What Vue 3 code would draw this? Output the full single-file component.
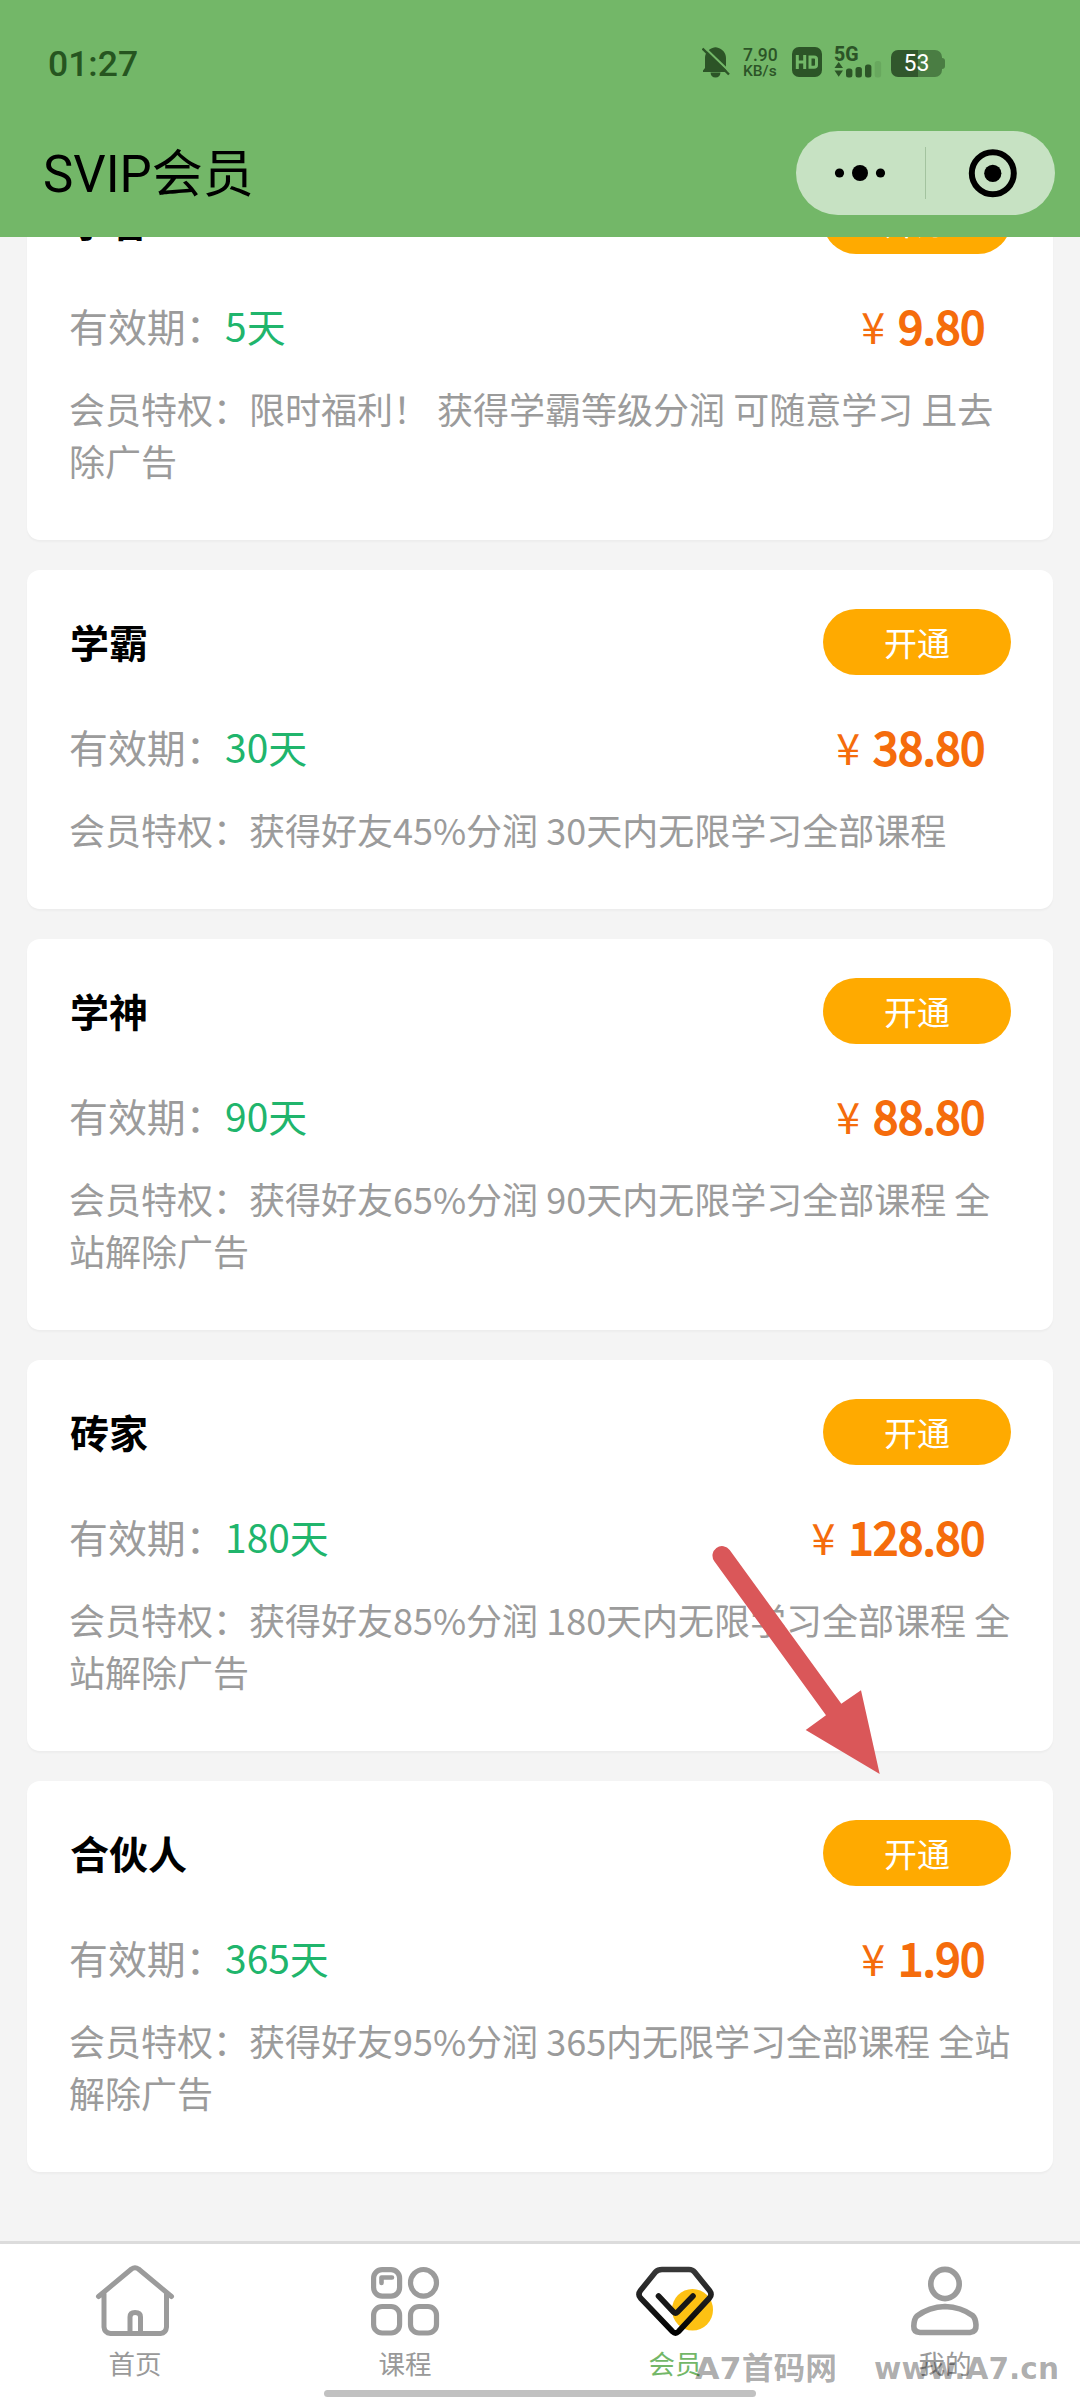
<script setup>
const plans = [
  { name: '学者', days: '5天', price: '9.80', lines: ['会员特权：限时福利！ 获得学霸等级分润 可随意学习 且去', '除广告'] },
  { name: '学霸', days: '30天', price: '38.80', lines: ['会员特权：获得好友45%分润 30天内无限学习全部课程'] },
  { name: '学神', days: '90天', price: '88.80', lines: ['会员特权：获得好友65%分润 90天内无限学习全部课程 全', '站解除广告'] },
  { name: '砖家', days: '180天', price: '128.80', lines: ['会员特权：获得好友85%分润 180天内无限学习全部课程 全', '站解除广告'] },
  { name: '合伙人', days: '365天', price: '1.90', lines: ['会员特权：获得好友95%分润 365内无限学习全部课程 全站', '解除广告'] },
]
</script>

<template>
  <div class="screen">
    <header class="header">
      <div class="status">
        <span class="time">01:27</span>
        <div class="indicators">
          <svg class="bell" width="28" height="31" viewBox="0 0 28 31">
            <path d="M1 25V23.500L3 21V11C3 5.500 7 2 10.500 1Q13.500 -.5 16.500 1C20 2 24 5.500 24 11V21L25 25Z" />
            <path d="M8.500 25.500H18.500Q18 30.500 13.500 30.500Q9 30.500 8.500 25.500Z" />
            <path d="M2.500 .5L28 25" stroke="#73b768" stroke-width="2.200" fill="none" />
            <path d="M.5 1.500L27 27.500" stroke="#2c5427" stroke-width="2.400" fill="none" />
          </svg>
          <div class="speed"><span class="rate">7.90</span><span class="unit">KB/s</span></div>
          <svg class="hd" width="30" height="30" viewBox="0 0 30 30">
            <rect width="30" height="30" rx="7" />
            <path d="M5.300 8V22M12.700 8V22M5.300 15H12.700M18 10H22Q24.500 10 24.500 12V18Q24.500 20.300 22 20.300H18Z" fill="none" stroke="#73b768" stroke-width="3" />
          </svg>
          <div class="signal">
            <span class="net">5G</span>
            <svg width="48" height="17" viewBox="0 0 48 17">
              <path d="M.5 7L4.700 1L9 7ZM.5 9.500H9L4.700 15.700Z" />
              <rect x="12" y="7.500" width="6.400" height="9" rx="2.500" />
              <rect x="21.500" y="6" width="6.400" height="10.500" rx="2.500" />
              <rect x="31" y="3.500" width="6.400" height="13" rx="2.500" />
              <rect x="40.700" y="0" width="6.400" height="16.500" rx="2.500" opacity=".15" />
            </svg>
          </div>
          <div class="battery"><span>53</span></div>
        </div>
      </div>
      <div class="titlebar">
        <h1>SVIP会员</h1>
        <div class="capsule">
          <svg width="259" height="84" viewBox="0 0 259 84">
            <circle cx="43.500" cy="42" r="4.600" />
            <circle cx="64" cy="42" r="8" />
            <circle cx="84.500" cy="42" r="4.600" />
            <rect x="129" y="16" width="1" height="52" fill="#a3c39f" />
            <circle cx="196.800" cy="42.300" r="21" fill="none" stroke="#000" stroke-width="6" />
            <circle cx="196.800" cy="42.300" r="8.600" />
          </svg>
        </div>
      </div>
    </header>

    <main class="content">
      <div class="list">
        <section v-for="p in plans" :key="p.name" class="card">
          <div class="row top">
            <h2>{{ p.name }}</h2>
            <button class="open">开通</button>
          </div>
          <div class="row info">
            <div class="period">有效期：<span>{{ p.days }}</span></div>
            <div class="price">¥ <b>{{ p.price }}</b></div>
          </div>
          <div class="desc">
            <p v-for="l in p.lines" :key="l">{{ l }}</p>
          </div>
        </section>
      </div>
    </main>

    <nav class="tabs">
      <div class="tab">
        <svg width="80" height="72" viewBox="0 0 80 72" fill="none" stroke="#9b9b9b" stroke-width="5" stroke-linecap="round" stroke-linejoin="round">
          <path d="M3.500 31.500L36.500 4Q40 1.500 43.500 4L76.500 31.500M9 29V62Q9.500 68 15.500 68.500H65.500Q71 68 71.500 62V29M35 67V52Q35 47.500 40 47.500Q45.500 47.500 45.500 52V67" />
        </svg>
        <span>首页</span>
      </div>
      <div class="tab">
        <svg width="80" height="72" viewBox="0 0 80 72" fill="none" stroke="#9b9b9b" stroke-width="5.200" stroke-linecap="round" stroke-linejoin="round">
          <rect x="8.600" y="4.600" width="26" height="26.500" rx="8.500" />
          <ellipse cx="58.500" cy="17.800" rx="13" ry="13.300" />
          <rect x="8.600" y="41.500" width="26" height="26.500" rx="8.500" />
          <rect x="45.500" y="41.500" width="26" height="26.500" rx="8.500" />
          <path d="M16.500 18V12.500H27" stroke-width="4.600" />
        </svg>
        <span>课程</span>
      </div>
      <div class="tab active">
        <svg width="80" height="72" viewBox="0 0 80 72" fill="none" stroke-linecap="round" stroke-linejoin="round">
          <defs>
            <linearGradient id="gem" x1="0" y1="0" x2="0" y2="1">
              <stop offset="0" stop-color="#383838" />
              <stop offset=".7" stop-color="#111" />
              <stop offset="1" stop-color="#000" />
            </linearGradient>
          </defs>
          <ellipse cx="57.500" cy="44.800" rx="20.500" ry="20.800" fill="#fdc113" />
          <path d="M27 4.500H54Q57.500 4.500 59.500 7L74.500 25.500Q77.500 29.500 74.500 33L43.500 66.500Q40.500 69.500 37.500 66.500L5.500 33Q2.500 29.500 5.500 25.500L20.500 7Q23 4.500 27 4.500Z" stroke="url(#gem)" stroke-width="5.600" />
          <path d="M23.500 31L38.500 47Q40.500 49 42.500 47L58 31" stroke="#181818" stroke-width="5.600" />
        </svg>
        <span>会员</span>
      </div>
      <div class="tab">
        <svg width="80" height="72" viewBox="0 0 80 72" fill="none" stroke="#9b9b9b" stroke-width="5.600" stroke-linejoin="round">
          <ellipse cx="40" cy="19" rx="14.200" ry="14.600" />
          <path d="M15 67.500H65Q71.500 67 71 60Q70.500 53 67.500 50.500Q56 42 40 41.500Q24 42 12 51Q9 54 8.800 61Q8.500 67 15 67.500Z" />
        </svg>
        <span>我的</span>
      </div>
    </nav>
    <div class="homebar"></div>

    <svg class="arrow" width="180" height="240" viewBox="0 0 180 240">
      <path d="M29.700 10L141.300 163.700L161 150.300L179.700 234L105.700 190L126 175.300L14.300 21.200A9.500 9.500 0 0 1 29.700 10Z" fill="#da5759" />
    </svg>
    <svg class="watermark" width="370" height="40" viewBox="0 0 370 40">
      <text x="0" y="32" textLength="142" lengthAdjust="spacingAndGlyphs">A7首码网</text>
      <text x="179" y="32" textLength="185" lengthAdjust="spacingAndGlyphs">www.A7.cn</text>
    </svg>
  </div>
</template>

<style>
body { margin: 0; }
</style>

<style scoped>
.screen {
  position: relative;
  width: 1080px;
  height: 2400px;
  overflow: hidden;
  display: flex;
  flex-direction: column;
  background: #f4f4f4;
  font-family: "Noto Sans CJK SC", sans-serif;
}
h1, h2, p { margin: 0; }
.header {
  flex: none;
  height: 237px;
  background: #73b768;
  font-family: Roboto, "Noto Sans CJK SC", sans-serif;
}
.status {
  height: 126px;
  display: flex;
  justify-content: space-between;
  padding: 0 138px 0 48px;
  color: #2c5427;
}
.time { font-size: 35.500px; font-weight: 500; line-height: 128px; color: #265520; }
.indicators { display: flex; align-items: flex-start; padding-top: 47px; fill: #2c5427; }
.speed {
  display: flex;
  flex-direction: column;
  width: 37px;
  margin-left: 13px;
  font-weight: 500;
}
.rate { font-size: 17.500px; line-height: 17px; }
.unit { font-size: 15.500px; line-height: 14px; }
.hd { margin-left: 12px; }
.signal { display: flex; flex-direction: column; width: 48px; margin-left: 12px; }
.net { height: 13.500px; font-size: 19.500px; line-height: 15px; font-weight: 800; }
.battery {
  position: relative;
  width: 51px;
  height: 27px;
  margin: 3px 0 0 9px;
  border-radius: 7px;
  background: linear-gradient(90deg, #31572c 53%, #4a7d43 53%);
  color: #fff;
  font-size: 23px;
  line-height: 28px;
  text-align: center;
}
.battery::after {
  content: "";
  position: absolute;
  left: 51px;
  top: 8px;
  width: 3px;
  height: 11px;
  border-radius: 0 4px 4px 0;
  background: #4a7d43;
}
.titlebar { display: flex; justify-content: space-between; padding: 5px 25px 0 43px; }
h1 { font-size: 51px; font-weight: 400; line-height: 87px; }
.capsule { height: 84px; border-radius: 42px; background: #c7e2c3; }
.content { flex: 1; overflow: hidden; padding: 0 27px; }
.list { display: flex; flex-direction: column; gap: 29.500px; margin-top: -88.500px; }
.card {
  flex: none;
  box-sizing: border-box;
  padding: 39px 42px 54.500px 42px;
  border-radius: 13px;
  background: #fff;
  box-shadow: 0 2px 2px rgba(0, 0, 0, .03);
}
.row { display: flex; justify-content: space-between; align-items: center; }
.top { height: 66px; }
h2 { padding: 0 0 2px 1px; font-size: 39px; font-weight: 700; line-height: 64px; }
.open {
  width: 188px;
  height: 66px;
  padding: 0;
  border: 0;
  border-radius: 33px;
  background: #ffaa00;
  color: #fff;
  font: 400 33px/67px "Noto Sans CJK SC", sans-serif;
}
.info { height: 60px; margin-top: 41px; padding-right: 26px; }
.period { font-size: 38.900px; line-height: 60px; color: #9b9b9b; white-space: nowrap; }
.period span { margin-left: .5px; color: #20b56c; }
.price { font-size: 43px; line-height: 60px; color: #f56c0c; white-space: pre; word-spacing: 3.500px; }
.price b { font-size: 44.700px; font-weight: 400; -webkit-text-stroke: 2px #f56c0c; }
.desc { margin-top: 27px; font-size: 36px; line-height: 52px; color: #9b9b9b; }
.desc p { white-space: pre; }
.tabs {
  flex: none;
  box-sizing: border-box;
  height: 159px;
  display: flex;
  border-top: 3px solid #dcdcdc;
  background: #fff;
}
.tab {
  flex: 1;
  display: flex;
  flex-direction: column;
  align-items: center;
  padding-top: 21px;
  color: #999;
  font-size: 26.500px;
  line-height: 40px;
}
.tab span { margin-top: 6px; }
.active { color: #73b768; }
.homebar {
  position: absolute;
  left: 324px;
  top: 2389.500px;
  width: 432px;
  height: 7px;
  border-radius: 4px;
  background: #c1c1c1;
}
.arrow { position: absolute; left: 700px; top: 1540px; }
.watermark {
  position: absolute;
  left: 695px;
  top: 2347px;
  font-family: "DejaVu Sans", "Noto Sans CJK SC", sans-serif;
  font-size: 31px;
  font-weight: 700;
  fill: rgba(0, 0, 0, .32);
}
</style>
